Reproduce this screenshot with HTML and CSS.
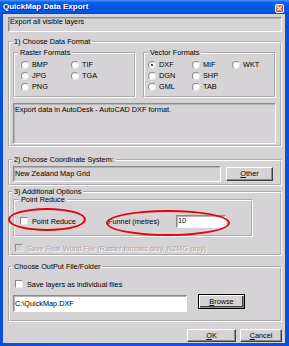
FILE: index.html
```html
<!DOCTYPE html>
<html>
<head>
<meta charset="utf-8">
<title>QuickMap Data Export</title>
<link rel="stylesheet" href="styles.css">
</head>
<body>
<div class="window">
  <div class="titlebar">
    <span class="title">QuickMap Data Export</span>
    <span class="close"><svg width="7" height="7" viewBox="0 0 7 7"><path d="M1.5 1.5L5.5 5.5M5.5 1.5L1.5 5.5" stroke="#fff" stroke-width="1.4"/></svg></span>
  </div>
  <div class="frame">
    <div class="client">
      <div class="field ro topfield">Export all visible layers</div>

      <fieldset class="group g1">
        <legend>1) Choose Data Format</legend>
        <div class="formats">
          <fieldset class="sub raster">
            <legend>Raster Formats</legend>
            <div class="radios raster-grid">
              <span class="radio"><span class="dot"></span>BMP</span>
              <span class="radio"><span class="dot"></span>TIF</span>
              <span class="radio"><span class="dot"></span>JPG</span>
              <span class="radio"><span class="dot"></span>TGA</span>
              <span class="radio"><span class="dot"></span>PNG</span>
            </div>
          </fieldset>
          <fieldset class="sub vector">
            <legend>Vector Formats</legend>
            <div class="radios vector-grid">
              <span class="radio"><span class="dot on"></span>DXF</span>
              <span class="radio"><span class="dot"></span>MIF</span>
              <span class="radio"><span class="dot"></span>WKT</span>
              <span class="radio"><span class="dot"></span>DGN</span>
              <span class="radio"><span class="dot"></span>SHP</span>
              <span></span>
              <span class="radio"><span class="dot"></span>GML</span>
              <span class="radio"><span class="dot"></span>TAB</span>
            </div>
          </fieldset>
        </div>
        <div class="field ro desc">Export data in AutoDesk - AutoCAD DXF format.</div>
      </fieldset>

      <fieldset class="group g2">
        <legend>2) Choose Coordinate System:</legend>
        <div class="coord-row">
          <div class="field ro coord">New Zealand Map Grid</div>
          <span class="btn other"><u>O</u>ther</span>
        </div>
      </fieldset>

      <fieldset class="group g3">
        <legend>3) Additional Options</legend>
        <fieldset class="sub pr">
          <legend>Point Reduce</legend>
          <div class="pr-row">
            <span class="check-label"><span class="box"></span>Point Reduce</span>
            <span class="funnel">Funnel (metres)</span>
            <div class="field edit funnel-input">10</div>
          </div>
        </fieldset>
        <div class="check-row disabled"><span class="box dis"></span>Save Real World File (Raster formats only, NZMG only)</div>
      </fieldset>

      <fieldset class="group g4">
        <legend>Choose OutPut File/Folder</legend>
        <div class="check-row"><span class="box"></span>Save layers as individual files</div>
        <div class="path-row">
          <div class="field edit path">C:\QuickMap.DXF</div>
          <span class="btn browse"><u>B</u>rowse</span>
        </div>
      </fieldset>

      <div class="actions">
        <span class="btn ok"><u>O</u>K</span>
        <span class="btn cancel"><u>C</u>ancel</span>
      </div>
    </div>
  </div>
  <div class="mark mark-left"></div>
  <div class="mark mark-right"></div>
</div>
</body>
</html>
```
FILE: styles.css
```css
* { box-sizing: border-box; }
html, body { margin: 0; padding: 0; }
body {
  width: 289px;
  height: 346px;
  overflow: hidden;
  font-family: "Liberation Sans", Arial, sans-serif;
  font-size: 7.3px;
  color: #000;
  background: #0a55e0;
}
.window {
  position: relative;
  width: 289px;
  height: 346px;
  display: flex;
  flex-direction: column;
}
.titlebar {
  height: 14px;
  display: flex;
  align-items: center;
  padding: 0 5px 0 3px;
  background: linear-gradient(#4a95f8 0%, #0c5fea 18%, #0054e3 55%, #0058ec 85%, #0044c4 100%);
}
.title {
  color: #fff;
  font-weight: bold;
  font-size: 8px;
  line-height: 10px;
  text-shadow: 1px 1px 0 #0a2c9a;
}
.close {
  margin-left: auto;
  margin-top: 2px;
  width: 9px;
  height: 9px;
  border: 1px solid #fff;
  border-radius: 2px;
  background: linear-gradient(135deg, #f09070, #d8481e 60%, #c03a14);
  display: flex;
  align-items: center;
  justify-content: center;
}
.close svg { display: block; }
.frame {
  flex: 1;
  display: flex;
  padding: 0 4px 3px 3px;
  background: linear-gradient(90deg, #0a4fd8, #0a58e6 30%, #0a58e6 70%, #0a4fd8);
}
.client {
  flex: 1;
  background: #d5d3d6;
  display: flex;
  flex-direction: column;
  padding: 0 3px 0 5px;
}

/* text fields */
.field {
  border: 1px solid;
  border-color: #8a8a8a #fff #fff #8a8a8a;
  box-shadow: inset 1px 1px 0 #b4b4b4;
  line-height: 8px;
  white-space: nowrap;
  overflow: hidden;
}
.ro { background: #d5d3d6; }
.edit { background: #fff; }
.topfield {
  margin-top: 3px;
  height: 15px;
  padding: 0 1px;
}

/* group boxes */
fieldset {
  margin: 0;
  min-width: 0;
  border: 2px groove #fff;
}
legend {
  padding: 0 2px;
  line-height: 8px;
}
.group { padding: 0 3px 0 2px; }
.g1 { margin-top: 6px; padding: 3px 4px 1px 2px; }
.formats {
  display: flex;
  gap: 7px;
  margin-left: 1px;
}
.sub { padding: 2px 3px 4px 3px; }
.raster { width: 123px; }
.vector { flex: 1; }
.radios {
  display: grid;
  grid-auto-rows: 11px;
}
.raster-grid { grid-template-columns: 50px 50px; margin-left: 3px; }
.vector-grid { grid-template-columns: 44px 40px auto; }
.radio {
  display: flex;
  align-items: center;
  gap: 3px;
  line-height: 11px;
}
.dot {
  width: 8px;
  height: 8px;
  border-radius: 50%;
  background: #fff;
  border: 1px solid;
  border-color: #8a8a8a #e8e8e8 #e8e8e8 #8a8a8a;
  display: flex;
  align-items: center;
  justify-content: center;
}
.dot.on::after {
  content: "";
  width: 2px;
  height: 2px;
  border-radius: 50%;
  background: #000;
}
.desc {
  margin: 5px 0 0 1px;
  height: 41px;
  padding: 2px 1px;
}

.g2 { margin-top: 9px; padding: 2px 3px 2px 2px; }
.coord-row {
  display: flex;
  align-items: center;
}
.coord {
  margin-left: 1px;
  width: 208px;
  height: 16px;
  padding: 0 1px;
  display: flex;
  align-items: center;
}

.btn {
  display: flex;
  align-items: center;
  justify-content: center;
  background: #d5d3d6;
  border: 1px solid;
  border-color: #fff #404040 #404040 #fff;
  box-shadow: inset -1px -1px 0 #8a8a8a;
  line-height: 8px;
}
.other { width: 47px; height: 14px; margin-left: 5px; }

.g3 { margin-top: 2px; padding: 0 3px 1px 2px; }
.pr {
  margin-left: 1px;
  width: 240px;
  padding: 10px 3px 7px 4px;
}
.pr-row {
  display: grid;
  grid-template-columns: 89px 68px 50px;
  align-items: center;
  height: 14px;
}
.check-label {
  display: flex;
  align-items: center;
  gap: 4px;
  margin-left: 1px;
}
.box {
  width: 8px;
  height: 8px;
  background: #fff;
  border: 1px solid;
  border-color: #8a8a8a #e8e8e8 #e8e8e8 #8a8a8a;
  flex: none;
}
.box.dis { background: #d5d3d6; }
.funnel-input {
  height: 13px;
  padding: 0 1px;
  display: flex;
  align-items: center;
}
.check-row {
  display: flex;
  align-items: center;
  gap: 4px;
  height: 10px;
  padding-left: 3px;
}
.g3 .check-row { margin-top: 6px; }
.disabled {
  color: #a8a6aa;
  text-shadow: 1px 1px 0 #fff;
}

.g4 { margin-top: 7px; padding: 8px 3px 8px 2px; }
.path-row {
  display: flex;
  align-items: flex-start;
  margin-top: 5px;
  height: 18px;
}
.path {
  margin: 1px 0 0 1px;
  width: 174px;
  height: 17px;
  padding: 0 1px;
  display: flex;
  align-items: center;
}
.browse {
  margin-left: 11px;
  width: 47px;
  height: 15px;
  border-color: #fff #000 #000 #fff;
  outline: 1px solid #000;
  outline-offset: -1px;
  box-shadow: inset 1px 1px 0 #fff, inset -1px -1px 0 #8a8a8a, inset -2px -2px 0 #404040;
}

.actions {
  display: flex;
  justify-content: flex-end;
  gap: 4px;
  margin-top: 7px;
}
.ok { width: 49px; height: 13px; }
.cancel { width: 42px; height: 13px; }

/* red annotation marks drawn over the dialog */
.mark {
  position: absolute;
  border: 2px solid #e3000e;
  border-radius: 50%;
}
.mark-left { left: 8px; top: 208px; width: 78px; height: 23px; }
.mark-right { left: 106px; top: 210px; width: 124px; height: 26px; }
```
